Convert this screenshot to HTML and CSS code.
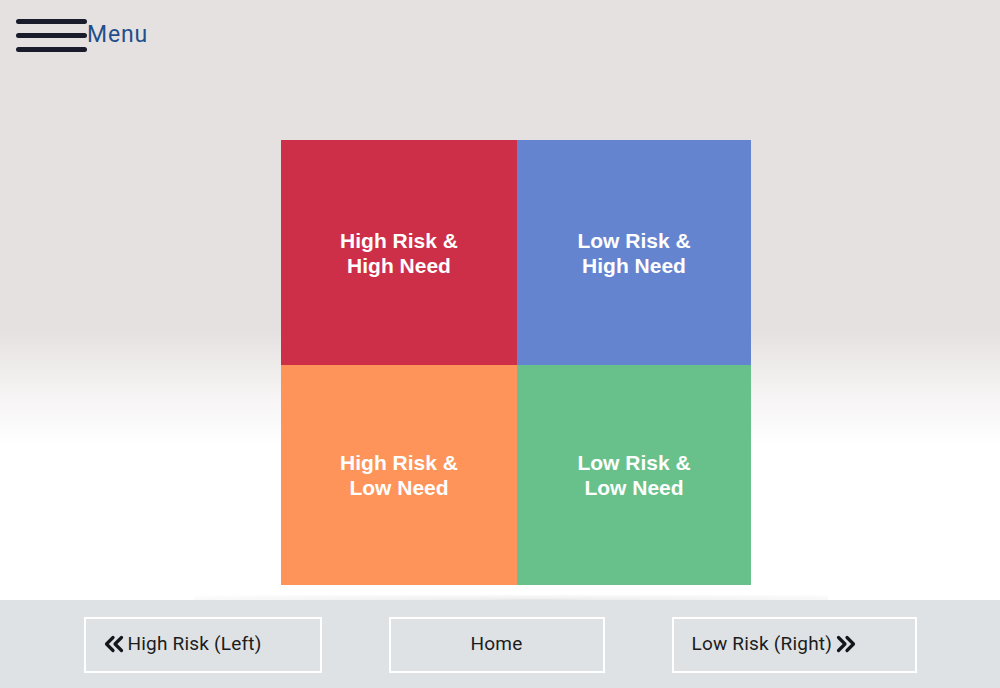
FILE: index.html
```html
<!DOCTYPE html>
<html lang="en">
<head>
  <meta charset="UTF-8">
  <meta name="viewport" content="width=device-width, initial-scale=1.0">
  <title>Risk &amp; Need</title>
  <link rel="stylesheet" href="styles.css">
</head>
<body>

<div class="page">
  <div class="header">
    <div class="menu-toggle">
      <span class="bars">
        <span class="bar"></span>
        <span class="bar"></span>
        <span class="bar"></span>
      </span>
      <span class="menu-label">Menu</span>
    </div>
  </div>

  <div class="stage">
    <div class="quadrants">
      <div class="cell red">High Risk &amp;<br>High Need</div>
      <div class="cell blue">Low Risk &amp;<br>High Need</div>
      <div class="cell orange">High Risk &amp;<br>Low Need</div>
      <div class="cell green">Low Risk &amp;<br>Low Need</div>
    </div>
    <div class="floor"></div>
  </div>

  <div class="nav-bar">
    <button class="nav-button left">
      <svg class="chevron" width="22" height="18" viewBox="0 0 22 18">
        <path d="M10 2.5 L3.5 9 L10 15.5 M18.5 2.5 L12 9 L18.5 15.5" fill="none" stroke="#15161c" stroke-width="3.2" stroke-linecap="round" stroke-linejoin="round"/>
      </svg>
      High Risk (Left)
    </button>
    <button class="nav-button home">Home</button>
    <button class="nav-button right">
      Low Risk (Right)
      <svg class="chevron" width="22" height="18" viewBox="0 0 22 18">
        <path d="M3.5 2.5 L10 9 L3.5 15.5 M12 2.5 L18.5 9 L12 15.5" fill="none" stroke="#15161c" stroke-width="3.2" stroke-linecap="round" stroke-linejoin="round"/>
      </svg>
    </button>
  </div>
</div>

</body>
</html>
```

FILE: styles.css
```css
body {
  margin: 0;
  font-family: Roboto, 'Open Sans', Arial, sans-serif;
  background: #ffffff;
}

.page {
  display: flex;
  flex-direction: column;
  height: 688px;
  overflow: hidden;
  background: linear-gradient(to bottom, #e5e1e0 0px, #e5e1e0 330px, #f7f5f5 400px, #ffffff 445px, #ffffff 100%);
}

.header {
  height: 70px;
  display: flex;
  align-items: flex-start;
  padding: 19px 0 0 16px;
  box-sizing: border-box;
}

.menu-toggle {
  display: flex;
  align-items: center;
  cursor: pointer;
}

.bars {
  display: flex;
  flex-direction: column;
  gap: 9px;
  width: 71px;
}

.bar {
  display: block;
  height: 5px;
  border-radius: 3px;
  background: #1a1c2b;
}

.menu-label {
  font-family: Roboto, Arial, sans-serif;
  font-size: 23px;
  letter-spacing: 0.8px;
  color: #1f4f8c;
  margin-top: -2px;
}

.stage {
  flex: 1;
  display: flex;
  flex-direction: column;
  align-items: center;
  padding-top: 70px;
}

.quadrants {
  display: grid;
  grid-template-columns: 236px 234px;
  grid-template-rows: 225px 220px;
  margin-left: 32px;
}

.cell {
  display: flex;
  align-items: center;
  justify-content: center;
  text-align: center;
  color: #ffffff;
  font-family: 'Liberation Sans', Arial, sans-serif;
  font-weight: bold;
  font-size: 21px;
  line-height: 25px;
}

.red { background: #cd2e48; }
.blue { background: #6584d0; }
.orange { background: #fe945a; }
.green { background: #68c18a; }

.floor {
  margin-top: auto;
  width: 634px;
  height: 5px;
  background: radial-gradient(ellipse at 54% 100%, #dcdcdc 0, #eeeeee 12%, #f4f4f4 40%, #ffffff 100%);
  margin-left: 22px;
}

.nav-bar {
  height: 88px;
  background: #dfe2e5;
  display: flex;
  justify-content: center;
  align-items: flex-start;
  gap: 67px;
  padding-top: 17px;
  box-sizing: border-box;
}

.nav-button {
  height: 56px;
  background: transparent;
  border: 2px solid #ffffff;
  font-family: Roboto, 'Open Sans', Arial, sans-serif;
  font-size: 19px;
  letter-spacing: 0.2px;
  color: #1c1c1c;
  display: flex;
  align-items: center;
  gap: 3px;
  padding: 0 16px 3px;
  cursor: pointer;
}

.nav-button.left {
  width: 238px;
  padding-left: 17px;
}

.nav-button.home {
  width: 216px;
  justify-content: center;
}

.nav-button.right {
  width: 245px;
  padding-left: 18px;
}

.chevron {
  flex-shrink: 0;
}
```
